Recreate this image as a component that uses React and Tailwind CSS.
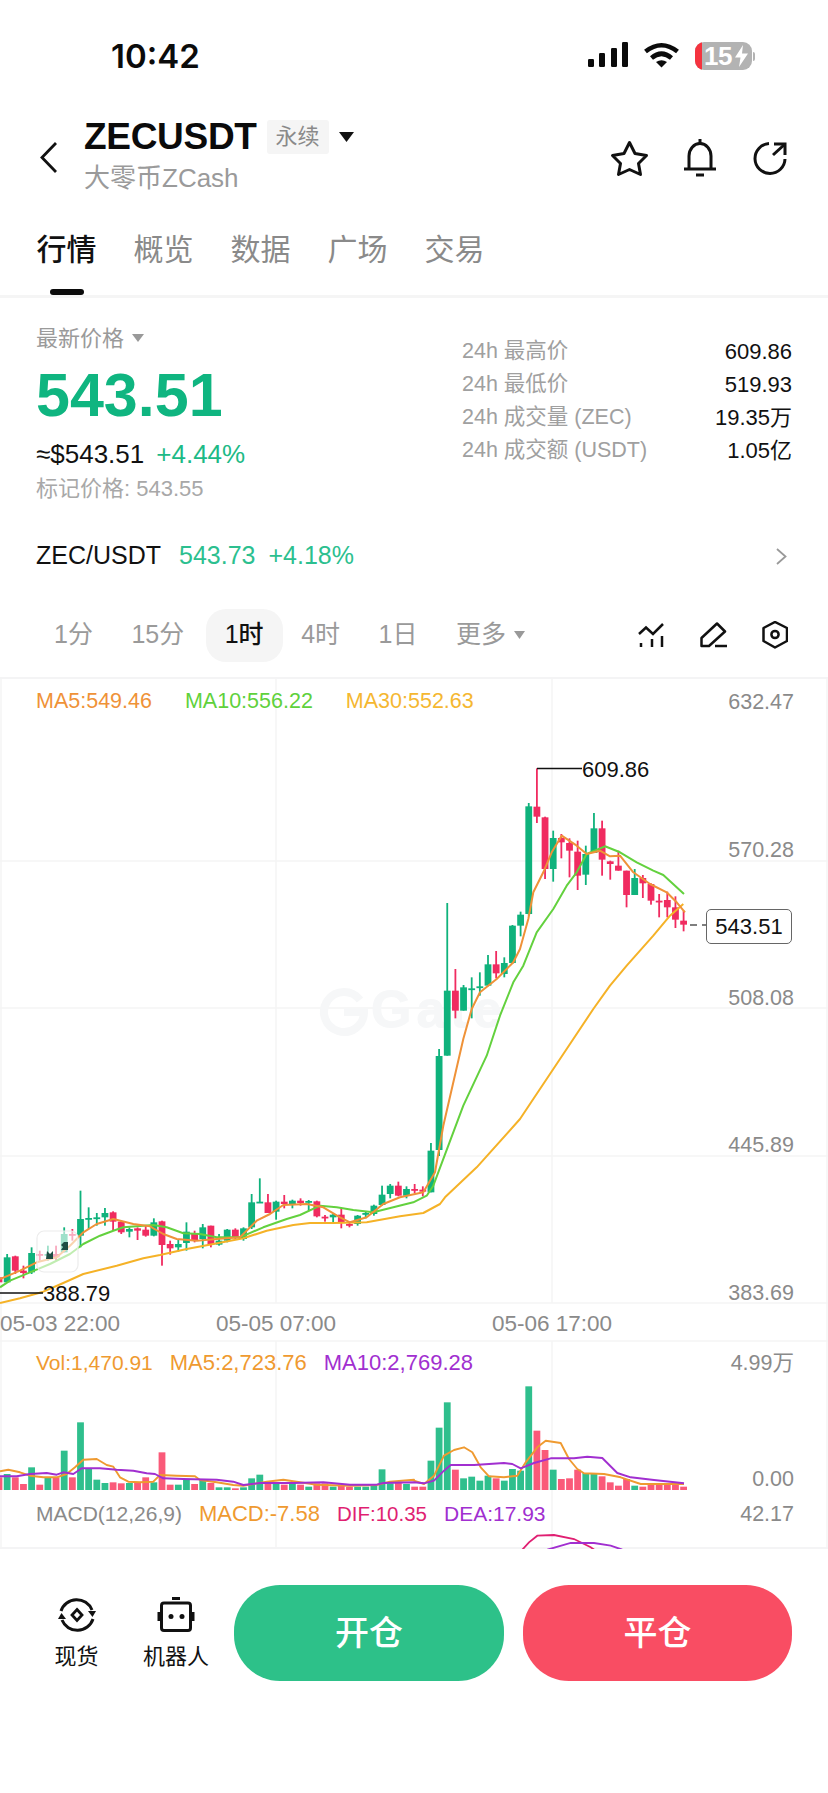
const GREEN = "#0fb27c";
const RED = "#f02b60";

// [wickTop, wickBottom, bodyTop, bodyBottom, colour]; first block is measured from the left crop, second from the right one
const leftCandles = [
  [405, 432, 415, 430, "r"], [345, 430, 355, 430, "g"], [350, 405, 352, 395, "r"], [380, 418, 395, 402, "r"],
  [325, 405, 342, 400, "g"], [335, 365, 345, 350, "r"], [320, 365, 345, 350, "g"], [320, 365, 345, 355, "r"],
  [265, 340, 285, 340, "g"], [270, 305, 285, 290, "r"], [155, 325, 240, 290, "g"], [205, 270, 237, 240, "g"],
  [222, 260, 235, 240, "g"], [207, 260, 222, 235, "g"], [217, 275, 220, 248, "r"], [245, 285, 248, 280, "r"],
  [265, 295, 270, 278, "g"], [265, 303, 268, 275, "r"], [258, 293, 272, 290, "r"], [238, 292, 250, 290, "g"],
  [245, 380, 247, 318, "r"], [305, 347, 315, 328, "r"], [300, 338, 315, 325, "g"], [250, 335, 278, 312, "g"],
  [275, 310, 283, 303, "r"], [255, 328, 265, 300, "g"], [260, 325, 260, 318, "r"], [285, 320, 305, 317, "g"],
  [270, 310, 272, 305, "g"], [268, 300, 272, 297, "r"], [265, 305, 268, 300, "g"], [165, 270, 190, 265, "g"],
  [118, 190, 188, 190, "g"], [165, 222, 190, 222, "r"], [185, 242, 188, 218, "g"], [168, 208, 188, 195, "r"],
  [182, 208, 185, 195, "g"], [178, 200, 185, 192, "r"], [183, 215, 186, 190, "g"], [185, 235, 187, 232, "r"],
  [228, 248, 233, 238, "r"], [225, 255, 227, 235, "g"], [207, 268, 227, 250, "r"], [248, 265, 255, 258, "r"],
  [228, 260, 230, 255, "g"], [217, 238, 222, 225, "g"], [197, 230, 200, 225, "g"], [140, 200, 167, 198, "g"],
  [135, 178, 140, 165, "g"], [128, 172, 140, 170, "r"], [142, 178, 150, 170, "g"], [135, 162, 150, 155, "r"],
  [142, 172, 152, 158, "r"], [12, 160, 35, 160, "g"],
];
const rightCandles = [
  [930, 1251, 951, 1233, "g"], [492, 950, 755, 950, "g"], [690, 838, 755, 815, "r"], [738, 815, 745, 815, "g"],
  [715, 838, 748, 750, "g"], [700, 770, 742, 745, "g"], [648, 742, 676, 740, "g"], [636, 718, 676, 703, "r"],
  [655, 715, 672, 705, "g"], [558, 675, 560, 672, "g"], [518, 592, 527, 560, "g"], [192, 530, 202, 525, "g"],
  [88, 252, 203, 233, "r"], [233, 420, 235, 390, "r"], [275, 428, 297, 390, "g"], [285, 358, 297, 310, "r"],
  [298, 415, 312, 335, "r"], [305, 453, 338, 410, "r"], [320, 438, 345, 407, "g"], [222, 342, 268, 342, "g"],
  [245, 410, 268, 362, "r"], [365, 422, 367, 375, "r"], [335, 395, 380, 395, "r"], [395, 505, 395, 468, "r"],
  [390, 468, 417, 468, "g"], [408, 477, 417, 433, "r"], [433, 497, 435, 485, "r"], [465, 535, 485, 490, "r"],
  [458, 535, 483, 505, "r"], [472, 567, 505, 542, "r"], [515, 577, 545, 557, "r"],
];
const candles = [
  ...leftCandles.map((c) => [1140 + c[0] / 3, 1140 + c[1] / 3, 1140 + c[2] / 3, 1140 + c[3] / 3, c[4]]),
  ...rightCandles.map((c) => [740 + c[0] / 3, 740 + c[1] / 3, 740 + c[2] / 3, 740 + c[3] / 3, c[4]]),
];

const volumes = [
  [415, "r"], [405, "g"], [415, "r"], [435, "r"], [385, "g"], [437, "r"], [415, "g"], [415, "r"], [335, "g"], [415, "r"],
  [250, "g"], [390, "g"], [422, "g"], [432, "g"], [430, "r"], [433, "r"], [432, "g"], [430, "r"], [415, "r"], [430, "g"],
  [340, "r"], [437, "r"], [437, "g"], [420, "g"], [435, "r"], [425, "g"], [432, "r"], [445, "g"], [445, "g"], [448, "r"],
  [445, "g"], [418, "g"], [407, "g"], [430, "r"], [430, "g"], [437, "r"], [432, "g"], [437, "r"], [443, "g"], [433, "r"],
  [433, "r"], [443, "g"], [437, "r"], [443, "r"], [443, "g"], [443, "g"], [440, "g"], [391, "g"], [433, "g"], [430, "r"],
  [435, "g"], [443, "r"], [443, "r"], [365, "g"], [266, "g"], [190, "g"], [392, "r"], [418, "g"], [413, "g"], [425, "g"],
  [410, "g"], [418, "r"], [425, "g"], [390, "g"], [395, "g"], [142, "g"], [275, "r"], [333, "r"], [392, "g"], [420, "r"],
  [418, "r"], [392, "r"], [402, "g"], [402, "g"], [412, "r"], [430, "r"], [440, "r"], [420, "r"], [440, "g"], [443, "r"],
  [437, "r"], [432, "r"], [435, "r"], [432, "r"], [443, "r"],
];

const from = (ox, oy, list) => list.map(([x, y]) => [ox + x / 3, oy + y / 3]);
const pts = (list) => list.map(([x, y]) => `${x.toFixed(1)},${y.toFixed(1)}`).join(" ");

const ma5 = [
  ...from(0, 1140, [[0, 420], [60, 395], [110, 370], [170, 355], [210, 320], [250, 280], [290, 255], [340, 240], [400, 255], [450, 262], [490, 285], [530, 300], [590, 305], [650, 300], [720, 295], [770, 245], [810, 225], [850, 198], [920, 195], [970, 205], [1020, 235], [1050, 250], [1100, 235], [1150, 195], [1200, 175], [1270, 160]]),
  ...from(420, 900, [[45, 820], [70, 680], [130, 420], [155, 330], [180, 280], [230, 240], [280, 190], [300, 150], [325, 60]]),
  ...from(420, 740, [[340, 460], [370, 400], [395, 340], [425, 290], [470, 320], [500, 345], [540, 335], [570, 352], [600, 350], [640, 400], [690, 435], [740, 460], [770, 490], [795, 520]]),
];
const ma10 = [
  ...from(0, 1140, [[0, 445], [30, 425], [90, 400], [150, 375], [210, 345], [250, 315], [300, 290], [340, 275], [370, 265], [410, 262], [460, 258], [500, 265], [550, 283], [600, 285], [650, 295], [720, 295], [790, 265], [860, 240], [900, 228], [960, 200], [1010, 205], [1060, 213], [1120, 220], [1180, 205], [1240, 190], [1280, 170]]),
  ...from(420, 900, [[40, 860], [130, 620]]),
  ...from(420, 740, [[200, 950], [240, 830], [280, 730], [310, 680], [350, 580], [400, 510], [440, 440], [470, 400], [500, 345], [555, 322], [600, 340], [650, 370], [700, 395], [730, 408], [792, 465]]),
];
const ma30 = [
  ...from(0, 1140, [[0, 492], [60, 478], [130, 458], [190, 432], [250, 405], [350, 380], [430, 358], [480, 348], [560, 330], [640, 315], [730, 298], [800, 275], [880, 258], [930, 252], [1000, 252], [1100, 250], [1200, 232], [1270, 222], [1320, 195]]),
  ...from(420, 900, [[75, 895], [170, 805], [300, 660], [340, 600], [420, 480], [520, 330], [570, 260], [620, 200], [700, 110], [750, 50], [790, 15]]),
];
const volMa5 = [
  ...from(0, 1340, [[0, 397], [25, 392], [60, 400], [90, 410], [130, 415], [170, 415], [200, 405], [225, 385], [250, 362], [290, 360], [320, 378], [340, 383], [360, 415], [385, 428], [420, 430], [460, 428], [480, 408], [530, 410], [585, 412], [600, 423], [650, 430], [700, 438], [730, 440], [800, 428], [850, 422], [890, 428], [950, 437], [1050, 440], [1130, 438], [1170, 428], [1242, 422]]),
  ...from(414, 1340, [[0, 425], [30, 435], [60, 410], [90, 350], [120, 333], [150, 325], [175, 340], [200, 385], [225, 412], [270, 415], [310, 410], [335, 370], [370, 325], [395, 305], [440, 312], [465, 360], [490, 390], [510, 403], [570, 405], [620, 415], [680, 435], [810, 435]]),
];
const volMa10 = [
  ...from(0, 1340, [[0, 412], [50, 412], [90, 405], [140, 402], [170, 407], [190, 400], [220, 405], [245, 388], [300, 388], [350, 392], [400, 395], [440, 403], [465, 405], [490, 418], [550, 420], [650, 422], [700, 428], [730, 438], [780, 432], [880, 432], [970, 430], [1050, 437], [1130, 437], [1150, 432], [1242, 430]]),
  ...from(414, 1340, [[30, 433], [60, 425], [90, 395], [110, 378], [180, 378], [270, 372], [295, 375], [320, 388], [360, 372], [410, 358], [480, 358], [520, 353], [565, 357], [610, 402], [650, 415], [720, 423], [810, 433]]),
];

function ChartDrawing() {
  return (
    <svg className="absolute inset-0 w-full h-full" viewBox="0 678 828 872">
      <g stroke="#f4f4f5" strokeWidth="1.5">
        {[862, 1009, 1157, 1304, 1342].map((y) => <line key={y} x1="0" x2="828" y1={y} y2={y} />)}
        <line x1="0" x2="828" y1="679" y2="679" strokeWidth="2" />
        <line x1="0" x2="828" y1="1549" y2="1549" strokeWidth="2" />
        <line x1="276" x2="276" y1="678" y2="1304" />
        <line x1="552" x2="552" y1="678" y2="1304" />
        <line x1="276" x2="276" y1="1342" y2="1550" />
        <line x1="552" x2="552" y1="1342" y2="1550" />
        <line x1="1" x2="1" y1="678" y2="1550" />
        <line x1="827" x2="827" y1="678" y2="1550" />
      </g>

      {/* watermark */}
      <g fill="#f6f7f8" stroke="#f6f7f8">
        <path d="M360 1001a20 20 0 1 0 4 12h-20" fill="none" strokeWidth="8" />
        <text x="371" y="1028" fontSize="52" fontWeight="700" letterSpacing="5" strokeWidth="1" fontFamily="Liberation Sans, sans-serif">Gate</text>
      </g>

      {candles.map((c, i) => {
        const x = -1 + 8.15 * i;
        const color = c[4] === "g" ? GREEN : RED;
        return (
          <g key={i} fill={color}>
            <rect x={x - 0.9} y={c[0]} width="1.8" height={c[1] - c[0]} />
            <rect x={x - 3.4} y={c[2]} width="6.8" height={Math.max(c[3] - c[2], 1.8)} />
          </g>
        );
      })}

      <polyline points={pts(ma30)} fill="none" stroke="#f5b227" strokeWidth="2" strokeLinejoin="round" />
      <polyline points={pts(ma10)} fill="none" stroke="#63d13e" strokeWidth="2" strokeLinejoin="round" />
      <polyline points={pts(ma5)} fill="none" stroke="#ef9238" strokeWidth="2" strokeLinejoin="round" />

      {/* small floating button over the candles */}
      <rect x="37" y="1232" width="41" height="41" rx="7" fill="#fff" fillOpacity="0.6" stroke="#ececec" strokeWidth="1.2" />
      <path d="M47 1252l3 3 3-3v8h-7zM68 1243v8h-7l2-3-2-2 3-3z" fill="#1f4d44" />

      {/* high and low marks */}
      <path d="M537 769.5H582" stroke="#111" strokeWidth="1.4" />
      <path d="M0 1294H43" stroke="#111" strokeWidth="1.4" />
      <path d="M690 926h7M702 926h4" stroke="#555" strokeWidth="1.4" />

      {volumes.map(([top, k], i) => (
        <rect key={i} x={-4.4 + 8.15 * i} y={1340 + top / 3} width="6.8" height={1491 - (1340 + top / 3)} fill={k === "g" ? "#2fbf8d" : "#fa5a79"} />
      ))}
      <polyline points={pts(volMa5)} fill="none" stroke="#ef9a30" strokeWidth="1.9" strokeLinejoin="round" />
      <polyline points={pts(volMa10)} fill="none" stroke="#a12fd0" strokeWidth="1.9" strokeLinejoin="round" />

      <polyline points={pts(from(414, 1340, [[325, 632], [345, 610], [370, 590], [420, 588], [480, 600], [530, 625], [545, 635]]))} fill="none" stroke="#e01f72" strokeWidth="1.8" />
      <polyline points={pts(from(414, 1340, [[400, 632], [470, 612], [540, 612], [590, 620], [625, 632]]))} fill="none" stroke="#a12fd0" strokeWidth="1.8" />
    </svg>
  );
}

function StatusBar() {
  return (
    <div className="flex h-[100px] pt-[36px] pl-[111px] pr-[73px]">
      <div className="font-['Inter',sans-serif] font-semibold text-[33px] leading-[40px] text-[#0b0b0b]">10:42</div>
      <div className="ml-auto flex items-start gap-[15px] pt-[6px]">
        <svg width="40" height="26" viewBox="589 43 40 26" fill="#0b0b0b">
          <rect x="589" y="60" width="6" height="8" rx="1.2" />
          <rect x="600" y="54" width="6" height="14" rx="1.2" />
          <rect x="612" y="49" width="6" height="19" rx="1.2" />
          <rect x="623" y="43" width="6" height="25" rx="1.2" />
        </svg>
        <svg width="37" height="26" viewBox="644 43 37 26" fill="none" stroke="#0b0b0b" strokeWidth="4.6">
          <path d="M646.5 52.5Q662.5 40 678.5 52.5" />
          <path d="M652.5 59Q662.5 50.5 672.5 59" />
          <path d="M657 63Q662.5 59.5 668 63L662.5 68.5Z" fill="#0b0b0b" stroke="none" />
        </svg>
        <div className="flex items-center">
          <div className="relative flex h-[28px] w-[57px] items-center overflow-hidden rounded-[9px] bg-[#b3b3b3] pl-[9px]">
            <div className="absolute left-0 top-0 h-full w-[7px] bg-[#f5333f]" />
            <span className="text-[26px] leading-none font-bold tracking-[-0.5px] text-white">15</span>
            <svg width="15" height="22" viewBox="0 0 15 22" fill="#fff" className="ml-[2px]">
              <path d="M9 0L1 12.5H6.5L5 22L14 8.5H8Z" />
            </svg>
          </div>
          <div className="ml-[1px] h-[9px] w-[2px] rounded-r bg-[#b3b3b3]" />
        </div>
      </div>
    </div>
  );
}

function Header() {
  return (
    <div className="flex h-[115px] items-center pb-[18px] pt-[18px]">
      <svg width="17" height="31" viewBox="40 142 17 31" fill="none" stroke="#111" strokeWidth="2.8" className="ml-[40px]">
        <path d="M56 143L42 157.5L56 172" />
      </svg>
      <div className="ml-[27px]">
        <div className="flex h-[34px] items-center">
          <span className="text-[37px] leading-none font-bold tracking-[-0.3px] text-[#0b0b0b]">ZECUSDT</span>
          <span className="ml-[10px] flex h-[34px] w-[62px] items-center justify-center rounded-[3px] bg-[#f5f5f5] text-[22px] text-[#8a8a8a]">永续</span>
          <svg width="15" height="10" viewBox="0 0 15 10" fill="#111" className="ml-[10px]"><path d="M0 0H15L7.5 10Z" /></svg>
        </div>
        <div className="mt-[6px] h-[36px] text-[26px] leading-[36px] text-[#9a9a9a]">大零币ZCash</div>
      </div>
      <div className="ml-auto flex items-center pr-[41px]">
        <svg width="40" height="38" viewBox="610 138 40 38" fill="none" stroke="#111" strokeWidth="3" strokeLinejoin="round">
          <path d="M629.5 141.5L635 152.5L646.5 154.5L638.5 162.5L640.5 173.5L629.5 168.5L618.5 173.5L620.5 162.5L612.5 154.5L624 152.5Z" />
        </svg>
        <svg width="34" height="38" viewBox="683 138 34 38" fill="none" stroke="#111" strokeWidth="3" className="ml-[33px]">
          <path d="M689 168V155a11 12.5 0 0 1 22 0V168" />
          <path d="M684 168H716" />
          <path d="M700 138v4" />
          <path d="M696 174H704" />
        </svg>
        <svg width="34" height="34" viewBox="753 141 34 34" fill="none" stroke="#111" strokeWidth="3" className="ml-[36px]">
          <path d="M769 143.5A15 15 0 1 0 785 159" />
          <path d="M773 155L784.5 144.5" />
          <path d="M774 144H785V155" />
        </svg>
      </div>
    </div>
  );
}

function Tabs() {
  const tabs = ["行情", "概览", "数据", "广场", "交易"];
  return (
    <div className="flex h-[80px] gap-[36px] pl-[36px] pt-[15px]">
      {tabs.map((tab, i) => (
        <div key={tab} className="flex w-[61px] flex-col items-center">
          <div className={"h-[40px] text-[30px] leading-[40px] " + (i === 0 ? "font-medium text-[#111]" : "text-[#8a8a8a]")}>{tab}</div>
          {i === 0 && <div className="mt-[19px] h-[6px] w-[34px] rounded-full bg-[#0b0b0b]" />}
        </div>
      ))}
    </div>
  );
}

function Stats() {
  const rows = [
    ["24h 最高价", "609.86"],
    ["24h 最低价", "519.93"],
    ["24h 成交量 (ZEC)", "19.35万"],
    ["24h 成交额 (USDT)", "1.05亿"],
  ];
  return (
    <div className="flex h-[227px]">
      <div className="pl-[36px] pt-[26px]">
        <div className="flex h-[28px] items-center text-[22px] text-[#9a9a9a]">
          最新价格
          <svg width="12" height="8" viewBox="0 0 12 8" fill="#999" className="ml-[8px]"><path d="M0 0H12L6 8Z" /></svg>
        </div>
        <div className="mt-[8px] h-[70px] text-[61px] leading-[70px] font-bold text-[#0fb580]">543.51</div>
        <div className="mt-[8px] flex h-[32px] items-center text-[26px]">
          <span className="text-[#111]">≈$543.51</span>
          <span className="ml-[12px] text-[#1cba86]">+4.44%</span>
        </div>
        <div className="mt-[4px] h-[30px] text-[22px] leading-[30px] text-[#a8a8a8]">标记价格: 543.55</div>
      </div>
      <div className="ml-auto w-[366px] pr-[36px] pt-[37px]">
        {rows.map(([label, value]) => (
          <div key={label} className="flex h-[33px] items-center justify-between">
            <span className="text-[21.5px] text-[#a0a0a0]">{label}</span>
            <span className="text-[22px] text-[#111]">{value}</span>
          </div>
        ))}
      </div>
    </div>
  );
}

function IntervalBar() {
  return (
    <div className="flex h-[92px] items-center pl-[54px] pr-[40px] pt-[8px] text-[25px] text-[#9a9a9a]">
      <div className="flex items-center gap-[38.5px]">
        <span>1分</span>
        <span>15分</span>
        <span className="-ml-[17px] -mr-[20px] flex h-[53px] items-center rounded-[20px] bg-[#f5f5f5] px-[19px] font-medium text-[#111]">1时</span>
        <span>4时</span>
        <span>1日</span>
        <span className="flex items-center">
          更多
          <svg width="11" height="8" viewBox="0 0 11 8" fill="#999" className="ml-[8px]"><path d="M0 0H11L5.5 8Z" /></svg>
        </span>
      </div>
      <div className="ml-auto flex items-center">
        <svg width="26" height="26" viewBox="638 621 26 26" fill="none" stroke="#111" strokeWidth="2.5">
          <path d="M639 633L646 626.5L653 633L663 623" />
          <path d="M641 642v4M652 638v8M662 635v11" />
        </svg>
        <svg width="28" height="27" viewBox="700 621 28 27" fill="none" stroke="#111" strokeWidth="2.5" className="ml-[36px]">
          <path d="M717 622.5L725 630.5L709 645H701.5V637Z" strokeLinejoin="round" />
          <path d="M715 645H727" />
        </svg>
        <svg width="26" height="28" viewBox="762 621 26 28" fill="none" stroke="#111" strokeWidth="2.5" className="ml-[34px]">
          <path d="M775 622L787 628V641L775 647.5L763.5 641V628Z" strokeLinejoin="round" />
          <circle cx="775" cy="634.5" r="3.6" />
        </svg>
      </div>
    </div>
  );
}

function ChartPanel() {
  return (
    <div className="relative h-[872px] overflow-hidden text-[21px] leading-[26px] text-[#8a8a8a]">
      <ChartDrawing />

      {/* price chart */}
      <div className="relative flex h-[629px] justify-between pl-[36px] pr-[34px] pt-[11px]">
        <div className="flex gap-[33px] text-[21.5px]">
          <span className="text-[#ef9238]">MA5:549.46</span>
          <span className="text-[#5fd13c]">MA10:556.22</span>
          <span className="text-[#f5b731]">MA30:552.63</span>
        </div>
        <div className="flex flex-col items-end justify-between pt-[1px] text-[21.5px]">
          <span>632.47</span>
          <span>570.28</span>
          <span>508.08</span>
          <span>445.89</span>
          <span>383.69</span>
        </div>
        <div className="absolute left-[582px] top-[80px] text-[22px] text-[#111]">609.86</div>
        <div className="absolute left-[43px] top-[604px] text-[22px] text-[#111]">388.79</div>
        <div className="absolute left-[706px] top-[232px] flex h-[35px] w-[86px] items-center justify-center rounded-[5px] border border-[#666] bg-white text-[22px] text-[#111]">543.51</div>
      </div>

      {/* time axis */}
      <div className="relative flex h-[36px] items-center text-[22.5px]">
        <span className="w-[216px] shrink-0">05-03 22:00</span>
        <span className="w-[276px] shrink-0">05-05 07:00</span>
        <span>05-06 17:00</span>
      </div>

      {/* volume */}
      <div className="relative flex h-[150px] justify-between pl-[36px] pr-[34px] pt-[8px]">
        <div className="flex gap-[17px] text-[22px]">
          <span className="text-[21px] text-[#ef9a30]">Vol:1,470.91</span>
          <span className="text-[#ef9a30]">MA5:2,723.76</span>
          <span className="text-[#a12fd0]">MA10:2,769.28</span>
        </div>
        <div className="flex flex-col items-end justify-between text-[21.5px]">
          <span>4.99万</span>
          <span>0.00</span>
        </div>
      </div>

      {/* macd */}
      <div className="relative flex justify-between pl-[36px] pr-[34px] pt-[9px]">
        <div className="flex gap-[17px] text-[21px]">
          <span>MACD(12,26,9)</span>
          <span className="text-[22px] text-[#ef9a30]">MACD:-7.58</span>
          <span className="text-[20.5px] text-[#e01f72]">DIF:10.35</span>
          <span className="text-[#a12fd0]">DEA:17.93</span>
        </div>
        <span className="text-[21.5px]">42.17</span>
      </div>
    </div>
  );
}

function BottomBar() {
  return (
    <div className="flex pl-[40px] pt-[36px]">
      <div className="flex w-[194px] gap-[30px] pt-[11px] text-[22px] text-[#111]">
        <div className="flex w-[73px] flex-col items-center">
          <svg width="38" height="38" viewBox="57 1597 38 38" fill="none" stroke="#111" strokeWidth="3">
            <path d="M60 1612A16.5 16.5 0 0 1 91 1611" />
            <path d="M92 1620A16.5 16.5 0 0 1 61 1621" />
            <path d="M87 1612H95L91.5 1618Z" fill="#111" stroke="none" />
            <path d="M57 1620H65L60.5 1614Z" fill="#111" stroke="none" />
            <path d="M76 1610.5L81 1616L76 1621.5L71 1616Z" strokeWidth="2.8" />
          </svg>
          <span className="mt-[11px] leading-[24px]">现货</span>
        </div>
        <div className="flex w-[66px] flex-col items-center">
          <svg width="38" height="38" viewBox="157 1597 38 38" fill="#111">
            <rect x="172" y="1598" width="8" height="3" />
            <rect x="161.5" y="1604" width="29" height="27.5" rx="2.5" fill="none" stroke="#111" strokeWidth="3" />
            <rect x="157.5" y="1613" width="3" height="9" />
            <rect x="191.5" y="1613" width="3" height="9" />
            <circle cx="171" cy="1617.5" r="2.5" />
            <circle cx="182" cy="1617.5" r="2.5" />
          </svg>
          <span className="mt-[11px] whitespace-nowrap leading-[24px]">机器人</span>
        </div>
      </div>
      <div className="flex gap-[19px]">
        <button className="flex h-[96px] w-[270px] items-center justify-center rounded-[46px] bg-[#2dc189] text-[34px] font-medium text-white">开仓</button>
        <button className="flex h-[96px] w-[269px] items-center justify-center rounded-[46px] bg-[#f94d63] text-[34px] font-medium text-white">平仓</button>
      </div>
    </div>
  );
}

export default function App() {
  return (
    <div className="h-[1793px] w-[828px] overflow-hidden bg-white font-['Liberation_Sans','Noto_Sans_CJK_SC',sans-serif]">
      <StatusBar />
      <Header />
      <Tabs />
      <div className="h-[3px] bg-[#f5f5f5]" />
      <Stats />
      <div className="flex h-[60px] items-center pl-[36px] pr-[41px] pt-[2px] text-[25px]">
        <span className="text-[#111]">ZEC/USDT</span>
        <span className="ml-[18px] text-[#2cbf8f]">543.73</span>
        <span className="ml-[13px] text-[#2cbf8f]">+4.18%</span>
        <svg width="11" height="17" viewBox="0 0 11 17" fill="none" stroke="#999" strokeWidth="1.8" className="ml-auto"><path d="M1 1L9.5 8.5L1 16" /></svg>
      </div>
      <IntervalBar />
      <ChartPanel />
      <BottomBar />
    </div>
  );
}
